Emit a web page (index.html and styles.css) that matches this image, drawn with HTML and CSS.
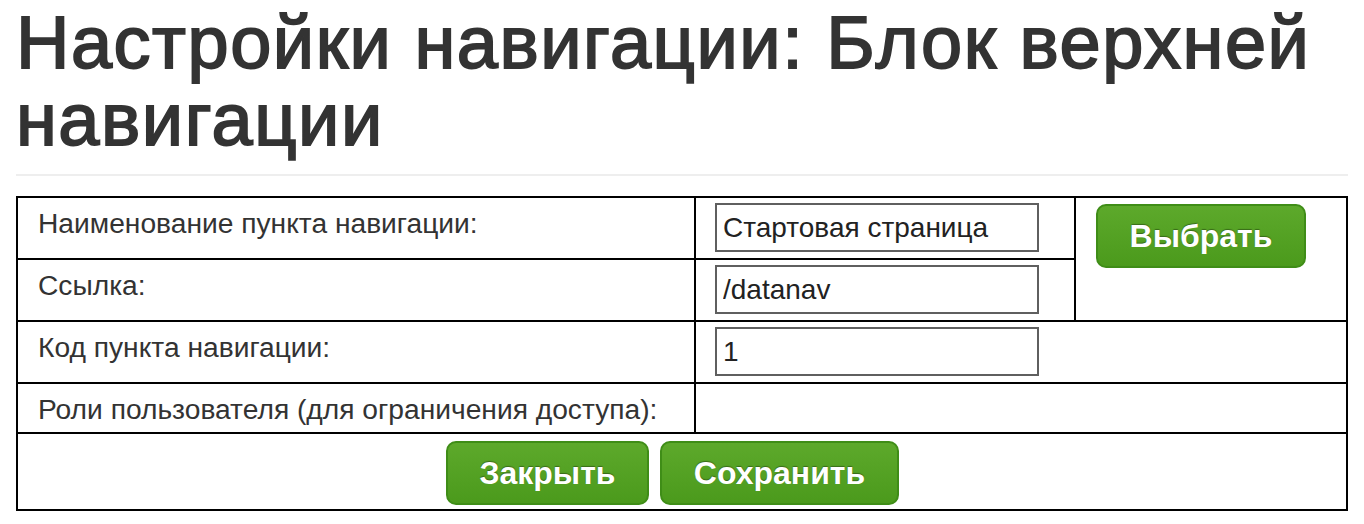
FILE: index.html
```html
<!DOCTYPE html>
<html lang="ru">
<head>
<meta charset="utf-8">
<title>Настройки навигации</title>
<link rel="stylesheet" href="styles.css">
</head>
<body>
<div class="page">
  <h1 class="page-title">Настройки навигации: Блок верхней навигации</h1>
  <table class="form-table">
    <colgroup>
      <col class="col-label">
      <col class="col-input">
      <col class="col-action">
    </colgroup>
    <tr>
      <td class="label">Наименование пункта навигации:</td>
      <td class="field"><input class="text-input" type="text" value="Стартовая страница"></td>
      <td class="action" rowspan="2"><button class="btn btn-select" type="button">Выбрать</button></td>
    </tr>
    <tr>
      <td class="label">Ссылка:</td>
      <td class="field"><input class="text-input" type="text" value="/datanav"></td>
    </tr>
    <tr>
      <td class="label">Код пункта навигации:</td>
      <td class="field" colspan="2"><input class="text-input" type="text" value="1"></td>
    </tr>
    <tr>
      <td class="label">Роли пользователя (для ограничения доступа):</td>
      <td class="field" colspan="2"></td>
    </tr>
    <tr>
      <td class="footer" colspan="3">
        <div class="footer-buttons">
          <button class="btn btn-close" type="button">Закрыть</button>
          <button class="btn btn-save" type="button">Сохранить</button>
        </div>
      </td>
    </tr>
  </table>
</div>
</body>
</html>
```

FILE: styles.css
```css
html, body {
  margin: 0;
  padding: 0;
  background: #ffffff;
}

body {
  font-family: "Liberation Sans", Arial, Helvetica, sans-serif;
  color: #333333;
}

.page {
  padding: 4px 16px 0;
}

.page-title {
  margin: 0 0 20px;
  padding: 0 0 16px;
  font-size: 74px;
  line-height: 77px;
  font-weight: normal;
  letter-spacing: 1.5px;
  -webkit-text-stroke: 1.8px #333333;
  color: #333333;
  border-bottom: 2px solid #eeeeee;
}

.form-table {
  width: 100%;
  border-collapse: collapse;
  table-layout: fixed;
  border: 2px solid #000000;
}

.col-label { width: 678px; }
.col-input { width: 380px; }

.form-table td {
  border: 2px solid #000000;
  vertical-align: top;
}

.label {
  padding: 5px 20px 3px;
  font-size: 28.2px;
  line-height: 40px;
  color: #333333;
}

.field {
  padding: 5px 19px 6px;
}

.text-input {
  display: block;
  box-sizing: border-box;
  width: 324px;
  height: 49px;
  margin: 0;
  padding: 0 6px;
  border: 2px solid #5f5f5f;
  border-radius: 0;
  font-family: "Liberation Sans", Arial, Helvetica, sans-serif;
  font-size: 28px;
  color: #222222;
  background: #ffffff;
}

.action {
  padding: 6px 20px;
}

.footer {
  padding: 7px 0 4px;
}

.footer-buttons {
  display: flex;
  justify-content: center;
  gap: 11px;
  padding-right: 19px;
}

.btn {
  box-sizing: border-box;
  height: 64px;
  padding: 0;
  font-family: "Liberation Sans", Arial, Helvetica, sans-serif;
  font-size: 32px;
  font-weight: bold;
  color: #ffffff;
  text-shadow: 0 -1px 1px rgba(0, 0, 0, 0.35);
  background: linear-gradient(to bottom, #5da92b 0%, #4b9a1c 100%);
  border: 2px solid #3f8d17;
  border-radius: 10px;
  cursor: pointer;
}

.btn-select { width: 210px; }
.btn-close { width: 203px; }
.btn-save { width: 239px; }
```
